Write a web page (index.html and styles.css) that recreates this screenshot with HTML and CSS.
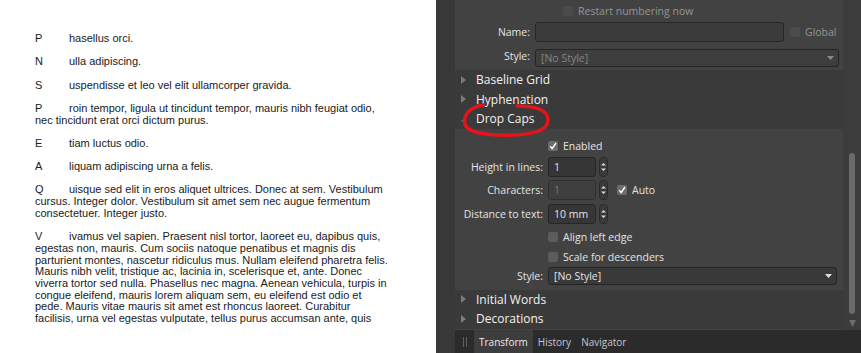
FILE: index.html
```html
<!DOCTYPE html>
<html lang="en">
<head>
    <meta charset="UTF-8">
    <title>Drop Caps</title>
    <link rel="stylesheet" href="styles.css">
</head>
<body>
<div class="page">
    <div class="doc">
        <p><span class="cap">P</span>hasellus orci.</p>
        <p><span class="cap">N</span>ulla adipiscing.</p>
        <p><span class="cap">S</span>uspendisse et leo vel elit ullamcorper gravida.</p>
        <p><span class="cap">P</span>roin tempor, ligula ut tincidunt tempor, mauris nibh feugiat odio, nec tincidunt erat orci dictum purus.</p>
        <p><span class="cap">E</span>tiam luctus odio.</p>
        <p><span class="cap">A</span>liquam adipiscing urna a felis.</p>
        <p><span class="cap">Q</span>uisque sed elit in eros aliquet ultrices. Donec at sem. Vestibulum cursus. Integer dolor. Vestibulum sit amet sem nec augue fermentum consectetuer. Integer justo.</p>
        <p><span class="cap">V</span>ivamus vel sapien. Praesent nisl tortor, laoreet eu, dapibus quis, egestas non, mauris. Cum sociis natoque penatibus et magnis dis parturient montes, nascetur ridiculus mus. Nullam eleifend pharetra felis. Mauris nibh velit, tristique ac, lacinia in, scelerisque et, ante. Donec viverra tortor sed nulla. Phasellus nec magna. Aenean vehicula, turpis in congue eleifend, mauris lorem aliquam sem, eu eleifend est odio et pede. Mauris vitae mauris sit amet est rhoncus laoreet. Curabitur facilisis, urna vel egestas vulputate, tellus purus accumsan ante, quis</p>
    </div>

    <div class="gutter"></div>

    <div class="studio">
        <div class="studio-main">
            <div class="panel">
                <!-- numbering (end of previous section) -->
                <div class="numbering">
                    <div class="row restart">
                        <span class="box off"></span><span class="dim">Restart numbering now</span>
                    </div>
                    <div class="row name-row">
                        <span class="label">Name:</span>
                        <div class="field name-field"></div>
                        <span class="box off global-box"></span><span class="dim">Global</span>
                    </div>
                    <div class="row style-row">
                        <span class="label">Style:</span>
                        <div class="select disabled top-select">
                            <span>[No Style]</span>
                            <svg width="7" height="4" viewBox="0 0 7 4"><path d="M0 0h7L3.5 4z" fill="#8a8a8a"/></svg>
                        </div>
                    </div>
                </div>

                <div class="sec-head">
                    <svg class="tri" width="5" height="8" viewBox="0 0 5 8"><path d="M0 0l5 4-5 4z"/></svg>Baseline Grid
                </div>
                <div class="sec-head">
                    <svg class="tri" width="5" height="8" viewBox="0 0 5 8"><path d="M0 0l5 4-5 4z"/></svg>Hyphenation
                </div>
                <div class="sec-head">
                    <svg class="tri" width="5" height="8" viewBox="0 0 6 6"><path d="M6 0v6H0z"/></svg>Drop Caps
                </div>

                <div class="dropcaps">
                    <div class="row">
                        <span class="label"></span>
                        <span class="box on"><svg width="10" height="10" viewBox="0 0 10 10"><path d="M2.2 5.2l2 2.3 3.8-5.5" fill="none" stroke="#fff" stroke-width="1.4"/></svg></span><span>Enabled</span>
                    </div>
                    <div class="row">
                        <span class="label">Height in lines:</span>
                        <div class="field num">1</div>
                        <div class="spin"><svg width="5" height="12" viewBox="0 0 5 12"><path d="M0 4.5L2.5 2 5 4.5zM0 7.5L2.5 10 5 7.5z"/></svg></div>
                    </div>
                    <div class="row">
                        <span class="label">Characters:</span>
                        <div class="field num disabled">1</div>
                        <div class="spin"><svg width="5" height="12" viewBox="0 0 5 12"><path d="M0 4.5L2.5 2 5 4.5zM0 7.5L2.5 10 5 7.5z"/></svg></div>
                        <span class="box on auto-box"><svg width="10" height="10" viewBox="0 0 10 10"><path d="M2.2 5.2l2 2.3 3.8-5.5" fill="none" stroke="#fff" stroke-width="1.4"/></svg></span><span>Auto</span>
                    </div>
                    <div class="row">
                        <span class="label">Distance to text:</span>
                        <div class="field num">10 mm</div>
                        <div class="spin"><svg width="5" height="12" viewBox="0 0 5 12"><path d="M0 4.5L2.5 2 5 4.5zM0 7.5L2.5 10 5 7.5z"/></svg></div>
                    </div>
                    <div class="row">
                        <span class="label"></span>
                        <span class="box"></span><span>Align left edge</span>
                    </div>
                    <div class="row">
                        <span class="label"></span>
                        <span class="box"></span><span>Scale for descenders</span>
                    </div>
                    <div class="row">
                        <span class="label">Style:</span>
                        <div class="select dc-select">
                            <span>[No Style]</span>
                            <svg width="7" height="4" viewBox="0 0 7 4"><path d="M0 0h7L3.5 4z" fill="#e0e0e0"/></svg>
                        </div>
                    </div>
                </div>

                <div class="sec-head">
                    <svg class="tri" width="5" height="8" viewBox="0 0 5 8"><path d="M0 0l5 4-5 4z"/></svg>Initial Words
                </div>
                <div class="sec-head">
                    <svg class="tri" width="5" height="8" viewBox="0 0 5 8"><path d="M0 0l5 4-5 4z"/></svg>Decorations
                </div>
            </div>

            <div class="scroll">
                <div class="thumb"></div>
                <svg width="7" height="7" viewBox="0 0 7 7"><path d="M0 0h7L3.5 7z" fill="#6c6c6c"/></svg>
            </div>

            <!-- red marker drawn over the panel -->
            <svg class="marker" width="100" height="45" viewBox="0 0 100 45">
                <path d="M28 10C15 12 8 20 10 29C12 38 35 41 60 40C80 39 93 35 93 25C93 16 82 11 62 11" fill="none" stroke="#e3141c" stroke-width="3.5" stroke-linecap="round"/>
            </svg>
        </div>

        <div class="tabs">
            <span class="grip"></span>
            <span class="tab active">Transform</span>
            <span class="tab">History</span>
            <span class="tab">Navigator</span>
        </div>
    </div>
</div>
</body>
</html>
```

FILE: styles.css
```css
* {
    box-sizing: border-box;
}
body {
    margin: 0;
    font-family: "Open Sans", sans-serif;
}
.page {
    display: flex;
    height: 353px;
    overflow: hidden;
}

/* document */
.doc {
    width: 436px;
    background: #fff;
    padding: 33px 0 0 35px;
    font-family: "Liberation Sans", Arial, sans-serif;
    font-size: 11px;
    line-height: 11.7px;
    color: #1a1a1a;
}
.doc p {
    margin: 0 0 11.6px;
    width: 357px;
}
.cap {
    display: inline-block;
    width: 34px;
}
.gutter {
    width: 19px;
    background: #383838;
}

/* studio panel */
.studio {
    flex: 1;
    display: flex;
    flex-direction: column;
    background: #2b2b2b;
}
.studio-main {
    height: 330px;
    display: flex;
    position: relative;
}
.panel {
    flex: 1;
    background: #424242;
    color: #e4e4e4;
    font-size: 10.5px;
}
.row {
    display: flex;
    align-items: center;
}
.label {
    text-align: right;
    flex-shrink: 0;
}
.dim {
    color: #959595;
}
.numbering {
    display: grid;
    grid-template-rows: 22px 20px 28px;
}
.numbering .label {
    width: 80px;
    padding-right: 5px;
}
.restart {
    padding-left: 108px;
}
.box {
    width: 10px;
    height: 10px;
    border-radius: 2px;
    background: #5c5c5c;
    margin-right: 5px;
    flex-shrink: 0;
    display: flex;
}
.box.off {
    background: #4b4b4b;
}
.box.on {
    background: #6c6c6c;
}
.field {
    height: 20px;
    background: #363636;
    border: 1px solid #262626;
    border-radius: 3px;
    display: flex;
    align-items: center;
    padding-left: 5px;
}
.name-field {
    width: 249px;
    background: #3b3b3b;
}
.global-box {
    margin-left: 6px;
}
.select {
    height: 18px;
    border: 1px solid #252525;
    border-radius: 3px;
    background: #393939;
    display: flex;
    align-items: center;
    justify-content: space-between;
    padding: 0 4px 0 5px;
}
.select.disabled {
    background: #3e3e3e;
    color: #858585;
}
.top-select {
    width: 304px;
    margin-top: 4px;
}

/* section headers */
.sec-head {
    height: 19.5px;
    background: #3a3a3a;
    display: flex;
    align-items: center;
    padding-left: 6px;
    font-size: 12px;
    color: #f2f2f2;
}
.tri {
    fill: #7c7c7c;
    margin-right: 10px;
}

/* drop caps section */
.dropcaps {
    display: grid;
    grid-template-rows: 21px 22px 24px 24px 21px 19px 20px;
    padding: 6.5px 0 3.5px;
}
.dropcaps .label {
    width: 93px;
    padding-right: 5px;
}
.num {
    width: 48px;
}
.num.disabled {
    background: #3f3f3f;
    border-color: #2f2f2f;
    color: #7a7a7a;
}
.spin {
    width: 9px;
    height: 20px;
    margin-left: 3px;
    border: 1px solid #2a2a2a;
    border-radius: 4px;
    background: #3a3a3a;
    display: flex;
    align-items: center;
    justify-content: center;
    fill: #d8d8d8;
}
.auto-box {
    margin-left: 9px;
}
.dc-select {
    width: 289px;
}

/* scrollbar */
.scroll {
    width: 18px;
    background: #3c3c3c;
    display: flex;
    flex-direction: column;
    align-items: center;
    padding-top: 153px;
}
.thumb {
    width: 6px;
    height: 161px;
    border-radius: 3px;
    background: #6a6a6a;
    margin-bottom: 6px;
}
.marker {
    position: absolute;
    left: 0;
    top: 95px;
}

/* bottom tabs */
.tabs {
    flex: 1;
    display: flex;
    align-items: stretch;
    padding-left: 8px;
    font-size: 10px;
}
.grip {
    width: 4px;
    margin: 7px 7px 6px 0;
    border-left: 1px solid #5e5e5e;
    border-right: 1px solid #5e5e5e;
}
.tab {
    padding: 0 5px;
    display: flex;
    align-items: center;
    color: #c6c6d4;
}
.tab.active {
    background: #3d3d3d;
    color: #ececec;
}
```
